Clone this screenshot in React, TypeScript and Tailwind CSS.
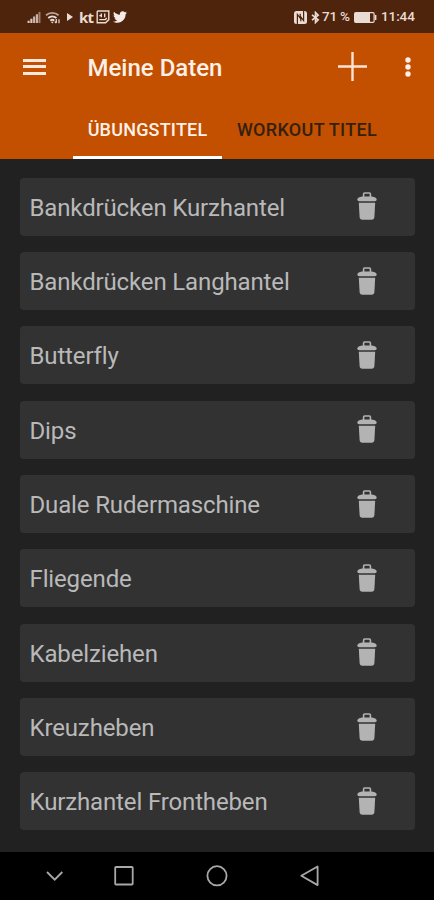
import { FaTwitter } from "react-icons/fa";

const EXERCISES = [
  "Bankdrücken Kurzhantel",
  "Bankdrücken Langhantel",
  "Butterfly",
  "Dips",
  "Duale Rudermaschine",
  "Fliegende",
  "Kabelziehen",
  "Kreuzheben",
  "Kurzhantel Frontheben",
];

/** System bar with notifications on the left, battery and clock on the right */
function StatusBar() {
  return (
    <div className="flex h-[33px] shrink-0 items-center bg-[#4f240c] pl-[27px] pr-[19px] pt-px text-[#e9dcd5]">
      {/* Signal */}
      <svg width="14" height="12" viewBox="0 0 14 13" fill="currentColor" className="shrink-0">
        <path d="M0 10.5h2.3V13H0zM3 8.5h2.3V13H3z" opacity="0.9" />
        <path d="M6 6h2.3v7H6zM9 3.5h2.3V13H9z" opacity="0.8" />
        <path d="M11.8 1H14v12h-2.2z" opacity="0.5" />
      </svg>

      {/* Wi-Fi */}
      <svg width="16" height="13" viewBox="0 0 16 13" fill="none" stroke="currentColor" strokeWidth="1.8" className="ml-1 shrink-0">
        <path d="M1 4.2a9.6 9.6 0 0 1 12.6 0" opacity="0.7" />
        <path d="M3.2 7a6.3 6.3 0 0 1 8.2 0" />
        <path d="M5.3 9.6a3.2 3.2 0 0 1 4 0" />
        <path d="M7.3 12.6l-1.5-1.9h3z" fill="currentColor" stroke="none" />
        <path d="M11.3 8v4M9.8 10.6l1.5 1.6M14 12.3V8.3" strokeWidth="1.2" />
      </svg>

      <svg width="6" height="8" viewBox="0 0 6 8" fill="currentColor" className="ml-[6px] shrink-0">
        <path d="M0 0l6 4L0 8z" />
      </svg>

      <span className="ml-[6px] w-[13px] shrink-0 text-[15px] font-bold leading-none tracking-[-0.8px] font-['Open_Sans',sans-serif]">kt</span>

      {/* Stream notification */}
      <svg width="14" height="14" viewBox="0 0 14 14" fill="none" stroke="currentColor" strokeWidth="1.4" className="ml-[4px] shrink-0">
        <path d="M1.9 1h10.9v8.6L9.6 12.7H1.2V1.7z" />
        <path d="M5.3 3.5v3.7M8.7 3.5v3.7M3.3 5.6h2M3.3 9.6h6l1.5-1.5" />
      </svg>

      <FaTwitter className="ml-[3px] h-[14px] w-[14px] shrink-0 text-[#f5ece7]" />

      <div className="ml-auto flex items-center">
        {/* NFC */}
        <svg width="13" height="13" viewBox="0 0 13 13" fill="none" className="shrink-0">
          <rect width="13" height="13" rx="2.5" fill="currentColor" />
          <path d="M3.4 13V3.4l3.4 4.4v2.4M9.6 0v9.6L6.2 5.2V2.8" stroke="#4f240c" strokeWidth="1.2" />
        </svg>
        {/* Bluetooth */}
        <svg width="9" height="13" viewBox="0 0 9 13" fill="none" stroke="currentColor" strokeWidth="1.6" className="ml-1 shrink-0">
          <path d="M1 3.8l6.2 5L4.5 11.5v-10l2.7 2.7L1 9.2" />
        </svg>
        <span className="ml-[2px] w-[29px] whitespace-nowrap text-[13.5px] font-medium leading-none tracking-[-0.25px]">71 %</span>
        {/* Battery */}
        <svg width="23" height="11" viewBox="0 0 23 11" fill="none" className="ml-[3px] shrink-0">
          <rect x="0.6" y="0.6" width="19.5" height="9.8" rx="1.2" stroke="currentColor" strokeWidth="1.2" />
          <rect x="1" y="1" width="15" height="9" fill="currentColor" />
          <path d="M21.6 3v5" stroke="currentColor" strokeWidth="1.6" />
        </svg>
        <span className="ml-[4px] w-[34px] whitespace-nowrap text-[13.5px] font-medium leading-none tracking-[-0.1px]">11:44</span>
      </div>
    </div>
  );
}

function AppBar() {
  return (
    <div className="flex h-[69px] items-center pl-[23px] pr-[23px]">
      <button aria-label="Menu" className="-mt-[2px] flex w-[23px] flex-col gap-[3.5px]">
        <span className="h-[3px] w-full bg-[#fbe9dd]" />
        <span className="h-[3px] w-full bg-[#fbe9dd]" />
        <span className="h-[3px] w-full bg-[#fbe9dd]" />
      </button>
      <h1 className="ml-[41.5px] text-[24px] font-medium leading-none text-[#fdf0e8]">Meine Daten</h1>
      <button aria-label="Add" className="-mt-[2px] ml-auto">
        <svg width="29" height="29" viewBox="0 0 29 29" stroke="#fbe3d5" strokeWidth="2.4">
          <path d="M14.5 0v29M0 14.5h29" />
        </svg>
      </button>
      <button aria-label="More" className="-mt-[2px] ml-[38px]">
        <svg width="6" height="20" viewBox="0 0 6 20" fill="#fdf0e8">
          <circle cx="3" cy="3" r="2.7" />
          <circle cx="3" cy="10" r="2.7" />
          <circle cx="3" cy="17" r="2.7" />
        </svg>
      </button>
    </div>
  );
}

function Tabs() {
  return (
    <div className="flex h-[56.5px] pl-[73px] text-[18px] font-medium leading-none">
      <button className="flex w-[149px] items-center justify-center border-b-[3px] border-white pt-[3px] tracking-[0.2px] text-[#fdf0e8]">
        ÜBUNGSTITEL
      </button>
      <button className="flex w-[170px] items-center justify-center border-b-[3px] border-transparent pt-[3px] tracking-[0.3px] text-[#35200f]">
        WORKOUT TITEL
      </button>
    </div>
  );
}

function TrashIcon() {
  return (
    <svg width="20" height="28" viewBox="0 0 20 28" fill="#b3b3b3">
      <path d="M6.6 5V2q0-1 1-1h4.8q1 0 1 1v3" fill="none" stroke="#b3b3b3" strokeWidth="1.6" />
      <path d="M5 4.4h10q4.2.6 4.8 3-.2 1.8-2 1.8H2.200q-1.800 0-2-1.800.6-2.400 4.800-3z" />
      <path d="M1.800 10.800h16.400l-.8 14.200q-.2 2.700-2.800 2.700H5.400q-2.600 0-2.800-2.700z" />
    </svg>
  );
}

function ExerciseRow({ title }: { title: string }) {
  return (
    <li className="flex h-[58px] items-center justify-between rounded bg-[#323232] pl-[9.5px] pr-[38px]">
      <span className="pt-[2px] text-[24px] leading-none tracking-[-0.14px] text-[#b9b9b9]">{title}</span>
      <button aria-label="Delete" className="-mt-px">
        <TrashIcon />
      </button>
    </li>
  );
}

function NavigationBar() {
  return (
    <div className="flex h-[48.5px] shrink-0 items-center bg-black pl-[46px] text-[#a8a8a8]">
      <svg width="18" height="22" viewBox="0 0 18 22" fill="none" stroke="currentColor" strokeWidth="1.8">
        <path d="M1 7l7.7 7.7L16.3 7" />
      </svg>
      <svg width="20" height="22" viewBox="0 0 20 22" fill="none" stroke="currentColor" strokeWidth="1.8" className="ml-[50px]">
        <rect x="1.2" y="2" width="17.5" height="17.5" rx="0.8" />
      </svg>
      <svg width="22" height="22" viewBox="0 0 22 22" fill="none" stroke="currentColor" strokeWidth="1.8" className="ml-[72px]">
        <circle cx="11" cy="10.8" r="9.6" />
      </svg>
      <svg width="19" height="22" viewBox="0 0 19 22" fill="none" stroke="currentColor" strokeWidth="1.8" strokeLinejoin="round" className="ml-[72px]">
        <path d="M17.6 1.5v18.6L1.3 10.8z" />
      </svg>
    </div>
  );
}

export default function App() {
  return (
    <div className="flex h-[900px] w-[434px] flex-col overflow-hidden bg-[#212121] font-[Roboto,sans-serif]">
      <StatusBar />
      <header className="shrink-0 bg-[#c25000]">
        <AppBar />
        <Tabs />
      </header>
      <ul className="flex grow flex-col gap-[16.35px] pl-5 pr-[19px] pt-[19.2px]">
        {EXERCISES.map((title) => (
          <ExerciseRow key={title} title={title} />
        ))}
      </ul>
      <NavigationBar />
    </div>
  );
}
